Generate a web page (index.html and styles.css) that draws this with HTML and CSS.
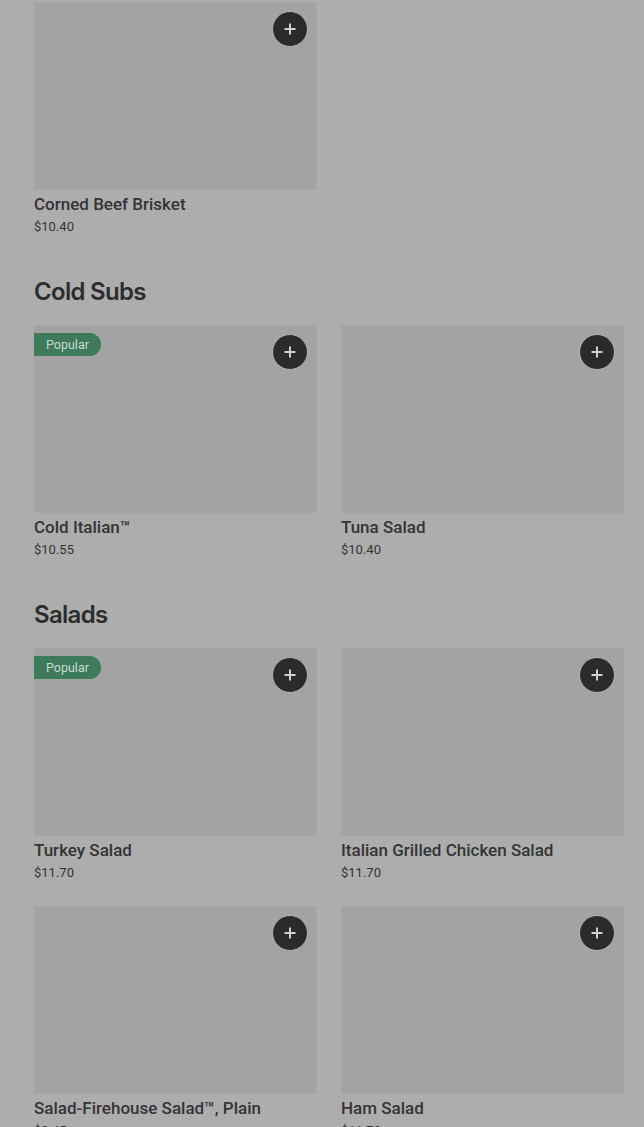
FILE: index.html
```html
<!DOCTYPE html>
<html>
<head>
	<meta charset="UTF-8">
	<meta name="viewport" content="width=device-width, initial-scale=1.0">
	<title>Menu</title>
	<link rel="stylesheet" href="styles.css">
</head>
<body>
	<div class="menu">
		<section class="category first">
			<div class="items">
				<div class="item">
					<div class="photo">
						<button class="add"><svg viewBox="0 0 12 12"><path d="M6 0.5v11M0.5 6h11"/></svg></button>
					</div>
					<p class="name">Corned Beef Brisket</p>
					<p class="price">$10.40</p>
				</div>
			</div>
		</section>

		<section class="category">
			<h2>Cold Subs</h2>
			<div class="items">
				<div class="item">
					<div class="photo">
						<span class="badge">Popular</span>
						<button class="add"><svg viewBox="0 0 12 12"><path d="M6 0.5v11M0.5 6h11"/></svg></button>
					</div>
					<p class="name">Cold Italian™</p>
					<p class="price">$10.55</p>
				</div>
				<div class="item">
					<div class="photo">
						<button class="add"><svg viewBox="0 0 12 12"><path d="M6 0.5v11M0.5 6h11"/></svg></button>
					</div>
					<p class="name">Tuna Salad</p>
					<p class="price">$10.40</p>
				</div>
			</div>
		</section>

		<section class="category">
			<h2>Salads</h2>
			<div class="items">
				<div class="item">
					<div class="photo">
						<span class="badge">Popular</span>
						<button class="add"><svg viewBox="0 0 12 12"><path d="M6 0.5v11M0.5 6h11"/></svg></button>
					</div>
					<p class="name">Turkey Salad</p>
					<p class="price">$11.70</p>
				</div>
				<div class="item">
					<div class="photo">
						<button class="add"><svg viewBox="0 0 12 12"><path d="M6 0.5v11M0.5 6h11"/></svg></button>
					</div>
					<p class="name">Italian Grilled Chicken Salad</p>
					<p class="price">$11.70</p>
				</div>
				<div class="item">
					<div class="photo">
						<button class="add"><svg viewBox="0 0 12 12"><path d="M6 0.5v11M0.5 6h11"/></svg></button>
					</div>
					<p class="name">Salad-Firehouse Salad™, Plain</p>
					<p class="price">$9.45</p>
				</div>
				<div class="item">
					<div class="photo">
						<button class="add"><svg viewBox="0 0 12 12"><path d="M6 0.5v11M0.5 6h11"/></svg></button>
					</div>
					<p class="name">Ham Salad</p>
					<p class="price">$11.70</p>
				</div>
			</div>
		</section>
	</div>
</body>
</html>
```

FILE: styles.css
```css
body {
	margin: 0;
	padding: 0;
	background-color: #adadad;
	font-family: Roboto, "Liberation Sans", sans-serif;
	color: #2f2f2f;
	overflow: hidden;
}

.menu {
	padding: 2px 20px 0 34px;
}

.category h2 {
	font-family: Inter, Roboto, sans-serif;
	font-size: 24px;
	font-weight: 600;
	letter-spacing: -0.7px;
	line-height: 32px;
	margin: 38px 0 17px;
	color: #2c2c2c;
}

.items {
	display: grid;
	grid-template-columns: repeat(2, 283px);
	column-gap: 24px;
	row-gap: 22px;
}

.photo {
	position: relative;
	height: 188px;
	background-color: #a3a3a3;
	box-shadow: inset 0 0 0 1px #a6a6a6;
}

.add {
	position: absolute;
	top: 9px;
	right: 9px;
	display: flex;
	align-items: center;
	justify-content: center;
	width: 36px;
	height: 36px;
	padding: 0;
	border: 1px solid #b5b5b5;
	border-radius: 50%;
	background-color: #2b2b2b;
}

.add svg {
	width: 12px;
	height: 12px;
	stroke: #cfcfcf;
	stroke-width: 2;
	fill: none;
}

.badge {
	position: absolute;
	top: 8px;
	left: 0;
	height: 23px;
	padding: 0 12px;
	border-radius: 0 12px 12px 0;
	background-color: #3e7b5a;
	color: #c9d9d0;
	font-size: 12.5px;
	line-height: 23px;
}

.name {
	margin: 2px 0 0;
	font-size: 17px;
	font-weight: 500;
	line-height: 24px;
	color: #343434;
}

.price {
	margin: 0;
	font-size: 13px;
	line-height: 22px;
	color: #333;
}
```
